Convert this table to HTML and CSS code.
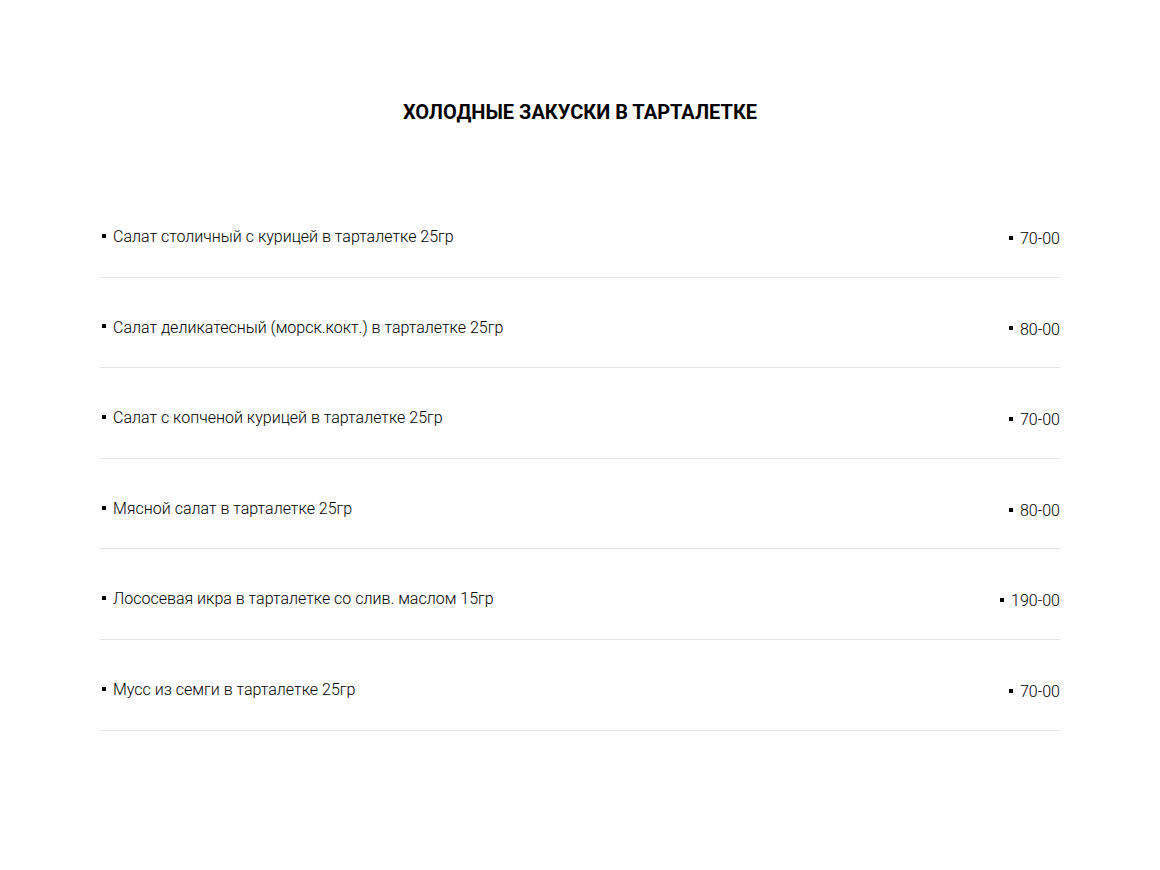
FILE: index.html
```html
<!DOCTYPE html>
<html lang="ru">
<head>
<meta charset="utf-8">
<title>Холодные закуски в тарталетке</title>
<link rel="stylesheet" href="styles.css">
</head>
<body>
<main class="menu">
  <h1 class="menu-title">ХОЛОДНЫЕ ЗАКУСКИ В ТАРТАЛЕТКЕ</h1>
  <ul class="menu-list">
    <li class="menu-row"><span class="item-name">Салат столичный с курицей в тарталетке 25гр</span><span class="item-price">70-00</span></li>
    <li class="menu-row"><span class="item-name">Салат деликатесный (морск.кокт.) в тарталетке 25гр</span><span class="item-price">80-00</span></li>
    <li class="menu-row"><span class="item-name">Салат с копченой курицей в тарталетке 25гр</span><span class="item-price">70-00</span></li>
    <li class="menu-row"><span class="item-name">Мясной салат в тарталетке 25гр</span><span class="item-price">80-00</span></li>
    <li class="menu-row"><span class="item-name">Лососевая икра в тарталетке со слив. маслом 15гр</span><span class="item-price">190-00</span></li>
    <li class="menu-row"><span class="item-name">Мусс из семги в тарталетке 25гр</span><span class="item-price">70-00</span></li>
  </ul>
</main>
</body>
</html>
```

FILE: styles.css
```css
* { box-sizing: border-box; }
html, body { margin: 0; padding: 0; background: #fff; }
body {
  font-family: Roboto, "Noto Sans", sans-serif;
  color: #000;
}
.menu {
  width: 960px;
  margin: 0 auto;
  padding-top: 100px;
}
.menu-title {
  margin: 0;
  text-align: center;
  font-size: 20px;
  line-height: 24px;
  font-weight: 700;
}
.menu-list {
  list-style: none;
  margin: 63px 0 0;
  padding: 0;
}
.menu-row {
  display: flex;
  justify-content: space-between;
  align-items: flex-start;
  height: 90.6px;
  padding-top: 40px;
  border-bottom: 1px solid #e6e6e6;
  font-size: 16px;
  line-height: 20px;
  font-weight: 300;
}
.item-name::before, .item-price::before {
  content: "";
  display: inline-block;
  width: 4px;
  height: 4px;
  background: #000;
  margin-right: 7px;
  vertical-align: middle;
  position: relative;
  top: -2px;
}
.item-name { margin-left: 2px; }
.item-price { padding-top: 2px; }
```
